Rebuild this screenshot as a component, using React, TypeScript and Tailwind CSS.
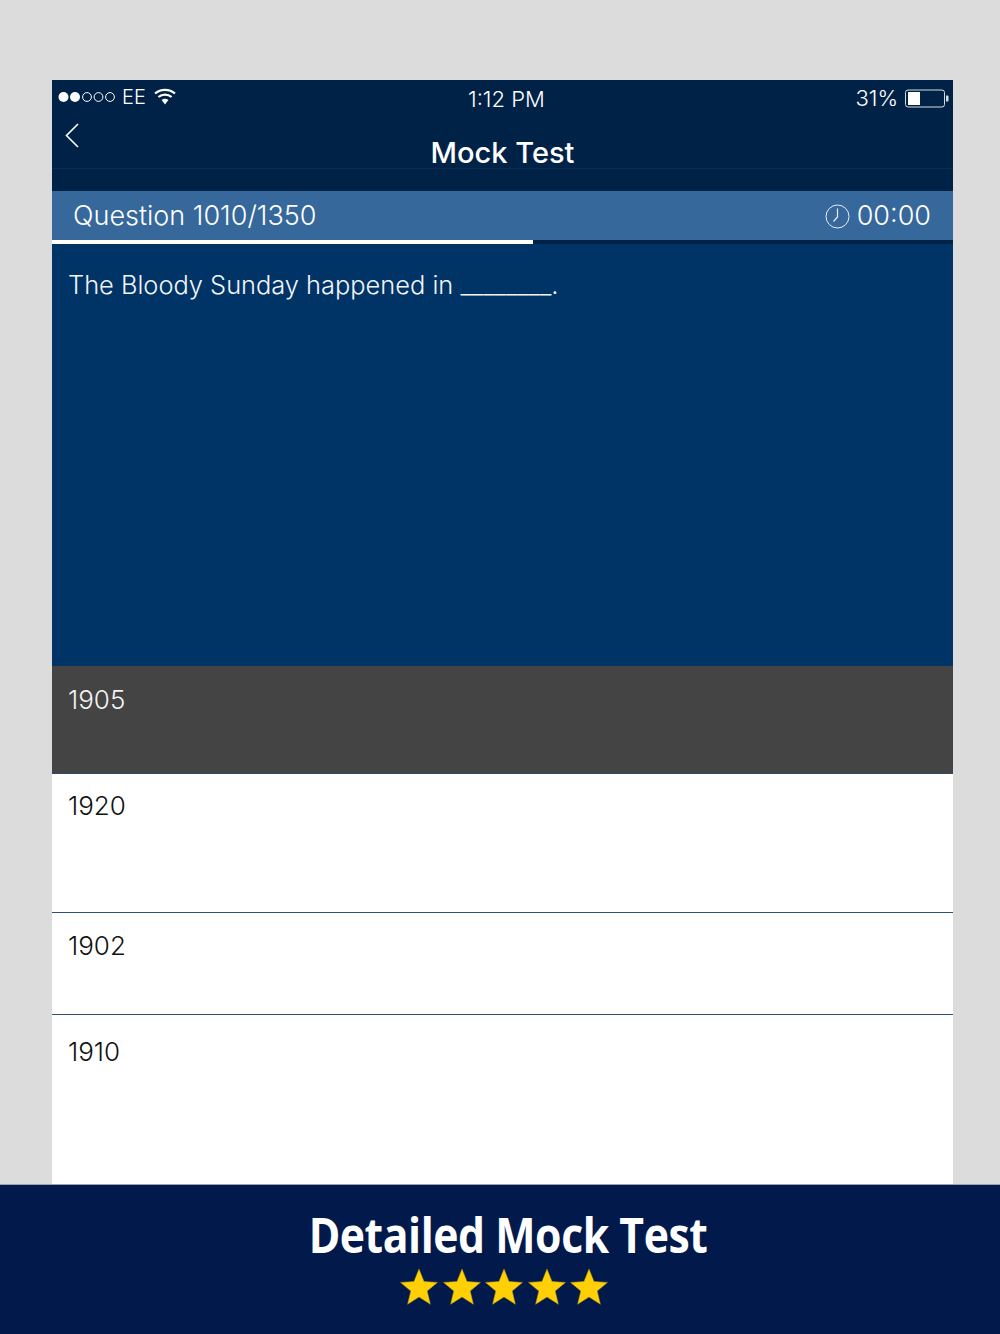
const answers = [
  { label: '1905', rowClass: 'h-[108px] pt-[17px] bg-[#444444] text-[#f2f2f2] border-b border-[#2c4a6e]' },
  { label: '1920', rowClass: 'h-[139px] pt-[15px] bg-white text-[#111111] border-b border-[#2c4f7c]' },
  { label: '1902', rowClass: 'h-[102px] pt-[16px] bg-white text-[#111111] border-b border-[#2c4f7c]' },
  { label: '1910', rowClass: 'h-[169px] pt-[20px] bg-white text-[#111111]' },
];

function SignalDots() {
  return (
    <svg width="58" height="12" viewBox="0 0 58 12" className="block">
      <circle cx="5.5" cy="6" r="5" fill="#fff" />
      <circle cx="17" cy="6" r="5" fill="#fff" />
      <circle cx="29" cy="6" r="4.4" fill="none" stroke="#fff" strokeWidth="1" />
      <circle cx="40.5" cy="6" r="4.4" fill="none" stroke="#fff" strokeWidth="1" />
      <circle cx="52" cy="6" r="4.4" fill="none" stroke="#fff" strokeWidth="1" />
    </svg>
  );
}

function WifiIcon() {
  return (
    <svg width="22" height="17" viewBox="0 0 22 17" className="block">
      <path d="M1 5.5C6.6 0.6 15.4 0.6 21 5.5" fill="none" stroke="#fff" strokeWidth="2.2" />
      <path d="M4.4 9C8.2 5.7 13.8 5.7 17.6 9" fill="none" stroke="#fff" strokeWidth="2.2" />
      <path d="M7.6 12C9.6 10.4 12.4 10.4 14.4 12L11 16.5Z" fill="#fff" />
    </svg>
  );
}

function BatteryIcon() {
  return (
    <svg width="44" height="19" viewBox="0 0 44 19" className="block">
      <rect x="0.5" y="1" width="39" height="17" rx="2.5" fill="none" stroke="#d5dbe3" strokeWidth="1" />
      <rect x="3" y="3" width="12" height="13" fill="#fff" />
      <path d="M41 6.5h1.5a1 1 0 0 1 1 1v4a1 1 0 0 1-1 1H41Z" fill="#d5dbe3" />
    </svg>
  );
}

function ClockIcon() {
  return (
    <svg width="25" height="25" viewBox="0 0 25 25" className="block">
      <circle cx="12.5" cy="12.5" r="11.5" fill="none" stroke="#e8eef5" strokeWidth="1" />
      <path d="M12.5 4.5V13L8.5 17.5" fill="none" stroke="#e8eef5" strokeWidth="1.2" />
    </svg>
  );
}

function Star() {
  return (
    <svg width="38" height="38" viewBox="0 0 38 38" className="block">
      <path
        d="M19 1L24 13.5L37.5 14.4L27.2 23L30.4 36.3L19 29L7.6 36.3L10.8 23L0.5 14.4L14 13.5Z"
        fill="#ffd005"
        stroke="#b89a10"
        strokeWidth="0.5"
      />
    </svg>
  );
}

export default function App() {
  return (
    <div className="relative h-[1334px] w-[1000px] overflow-hidden bg-[#dddcdd] font-['Inter',sans-serif]">
      <div className="ml-[52px] mt-[80px] w-[901px]">
        {/* Status and nav bar */}
        <div className="flex h-[111px] flex-col bg-[#012247] text-white">
          <div className="relative flex h-[89px] flex-col border-b border-[#0a2d52]">
            <div className="flex h-[36px] items-center justify-between pl-[6px] pr-[4px] text-[20px] font-light">
              <div className="flex items-center gap-[6px] pb-[2px]">
                <SignalDots />
                <span>EE</span>
                <span className="ml-[2px]">
                  <WifiIcon />
                </span>
              </div>
              <span className="absolute left-[416px] top-[3px] text-[22px]">1:12 PM</span>
              <div className="flex items-center gap-[7px] pt-[2px]">
                <span className="text-[22px]">31%</span>
                <BatteryIcon />
              </div>
            </div>
            <svg width="16" height="26" viewBox="0 0 16 26" className="absolute left-[12px] top-[42px]">
              <path d="M14 2L2.5 13.5L14 25" fill="none" stroke="#fff" strokeWidth="1.6" />
            </svg>
            <h1 className="mt-[20px] text-center text-[29px] font-medium leading-[36px]">Mock Test</h1>
          </div>
        </div>

        {/* Question bar */}
        <div className="flex h-[49px] items-center justify-between bg-[#36689b] pl-[21px] pr-[22px] pt-[2px] text-[27px] font-light text-white">
          <span>Question 1010/1350</span>
          <div className="flex items-center gap-[7px]">
            <ClockIcon />
            <span>00:00</span>
          </div>
        </div>

        {/* Progress */}
        <div className="h-[4px] bg-[#012247]">
          <div className="h-full w-[481px] bg-white" />
        </div>

        {/* Question */}
        <div className="h-[422px] bg-[#003366] px-[16px] pt-[24px] text-[25.4px] font-light leading-[34px] text-[#f2f5f9]">
          The Bloody Sunday happened in ________.
        </div>

        {/* Answers */}
        {answers.map((a) => (
          <div key={a.label} className={`${a.rowClass} px-[16px] text-[26px] font-light leading-[34px]`}>
            {a.label}
          </div>
        ))}
      </div>

      {/* Promo banner */}
      <div className="absolute bottom-0 left-0 flex h-[150px] w-full flex-col items-center border-t border-[#9aa0ad] bg-[#011a4b] pl-[8px] pt-[24px]">
        <div className="ml-[7px] origin-center scale-x-[0.89] font-['Open_Sans',sans-serif] text-[48px] font-bold leading-[52px] tracking-[-0.5px] text-white">
          Detailed Mock Test
        </div>
        <div className="mt-[7px] flex gap-[4.5px]">
          <Star />
          <Star />
          <Star />
          <Star />
          <Star />
        </div>
      </div>
    </div>
  );
}
